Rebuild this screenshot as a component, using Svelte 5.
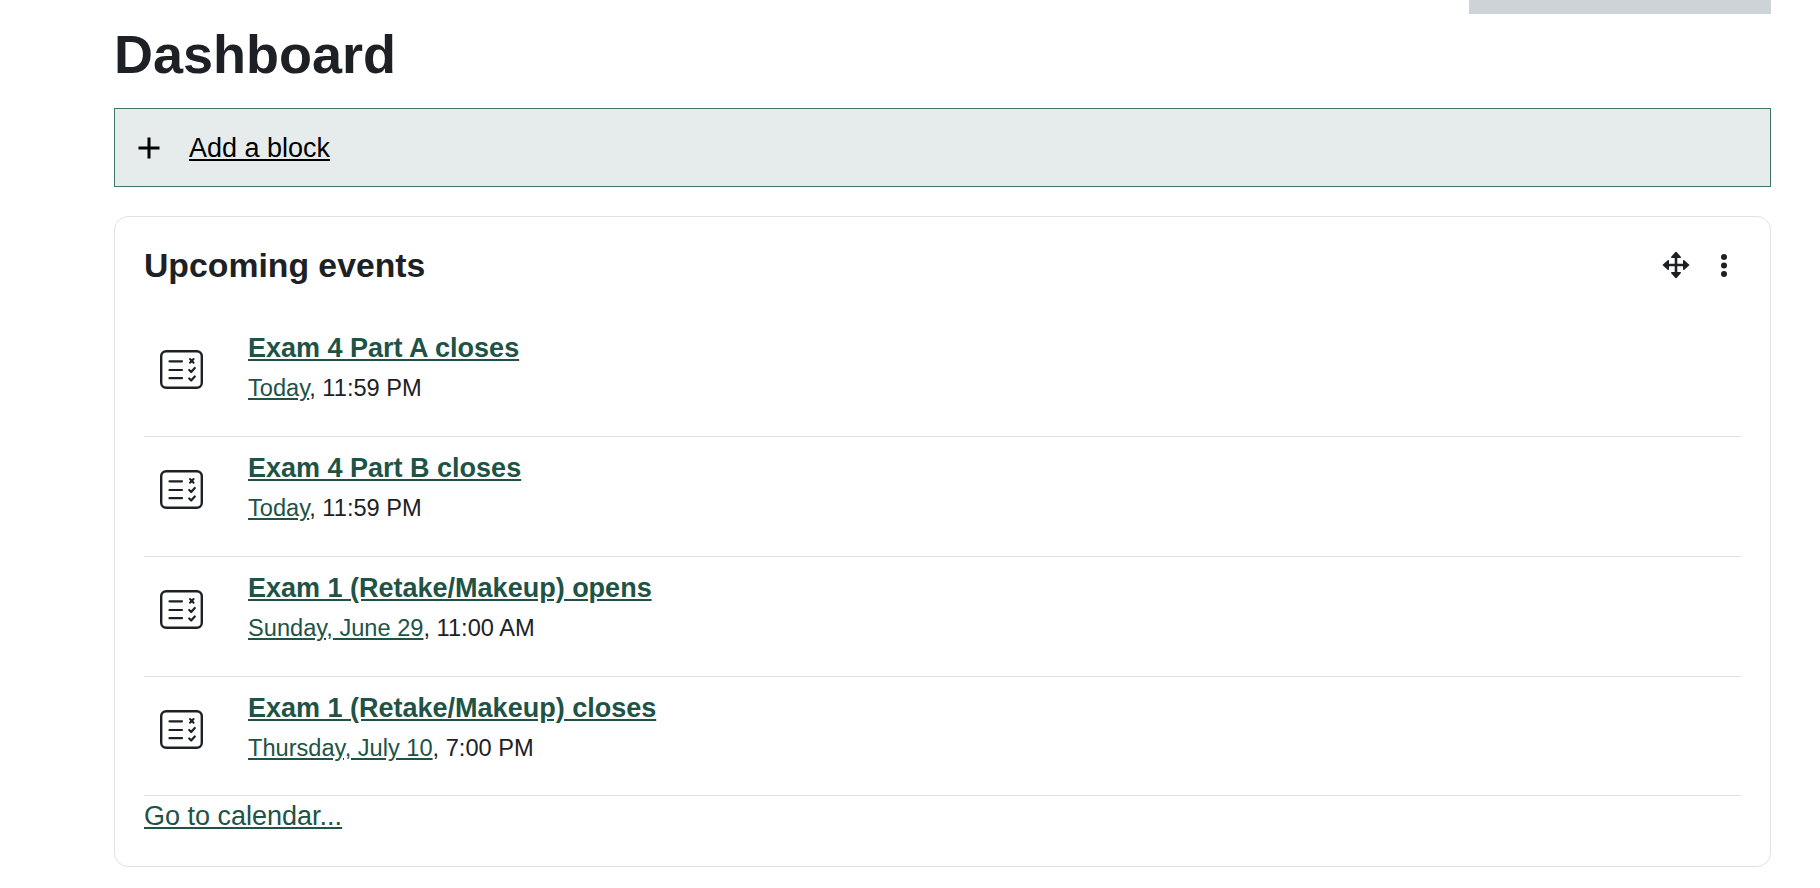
<script>
  const events = [
    { title: 'Exam 4 Part A closes', date: 'Today', time: '11:59 PM' },
    { title: 'Exam 4 Part B closes', date: 'Today', time: '11:59 PM' },
    { title: 'Exam 1 (Retake/Makeup) opens', date: 'Sunday, June 29', time: '11:00 AM' },
    { title: 'Exam 1 (Retake/Makeup) closes', date: 'Thursday, July 10', time: '7:00 PM' }
  ];
</script>

<div class="page">
  <div class="topbar"><div class="greybar"></div></div>
  <h1>Dashboard</h1>
  <div class="addblock">
    <svg class="plus" viewBox="0 0 24 24" width="24" height="24"><path d="M12 1.5v21M1.5 12h21" stroke="#000" stroke-width="3" fill="none" /></svg>
    <a href="#add">Add a block</a>
  </div>
  <section class="card">
    <header>
      <h2>Upcoming events</h2>
      <div class="tools">
        <svg viewBox="0 0 28 28" width="28" height="28" fill="#1d2125" stroke="#1d2125" stroke-linejoin="round">
          <path d="M14 3v22M3 14h22" stroke-width="2.6" fill="none" />
          <path d="M14 1.5l4.2 4.7h-8.4zM14 26.5l4.2-4.7h-8.4zM1.5 14l4.7-4.2v8.4zM26.5 14l-4.7-4.2v8.4z" stroke-width="1.6" />
        </svg>
        <svg viewBox="0 0 10 24" width="10" height="24" fill="#1d2125">
          <circle cx="5" cy="4" r="3" /><circle cx="5" cy="12.5" r="3" /><circle cx="5" cy="21" r="3" />
        </svg>
      </div>
    </header>
    <ul>
      {#each events as e}
        <li>
          <svg class="ev" viewBox="0 0 43 39" width="43" height="39" fill="none" stroke="#1d2125" stroke-linecap="round" stroke-linejoin="round">
            <rect x="1.2" y="1.2" width="40.6" height="36.6" rx="5" stroke-width="2.4" />
            <path d="M9.5 11.3h12.5M9.5 20h12.5M9.5 28.2h12.5" stroke-width="2.2" />
            <path d="M30 9l3.6 3.8M33.6 9l-3.6 3.8" stroke-width="2" />
            <path d="M29.2 20l2 2 3.6-4M29.2 28.5l2 2 3.6-4" stroke-width="2.2" />
          </svg>
          <div class="info">
            <a class="title" href="#e">{e.title}</a>
            <div class="when"><a href="#d">{e.date}</a>, {e.time}</div>
          </div>
        </li>
      {/each}
    </ul>
    <a class="cal" href="#cal">Go to calendar...</a>
  </section>
</div>

<style>
  :global(body) {
    margin: 0;
    background: #fff;
    font-family: "Liberation Sans", Arial, sans-serif;
    color: #1d2125;
  }
  .page {
    box-sizing: border-box;
    height: 888px;
    overflow: hidden;
    padding: 0 49px 0 114px;
  }
  .topbar {
    display: flex;
    justify-content: flex-end;
  }
  .greybar {
    width: 302px;
    height: 14px;
    background: #cdd3d7;
  }
  h1 {
    margin: 10px 0 0;
    font-size: 54px;
    line-height: 60px;
    font-weight: 700;
  }
  .addblock {
    box-sizing: border-box;
    display: flex;
    align-items: center;
    height: 79px;
    margin-top: 24px;
    padding-left: 22px;
    background: #e6ecec;
    border: 1px solid #3d7566;
    gap: 28px;
    font-size: 27px;
    line-height: 33px;
  }
  .addblock a {
    color: #000;
    padding-top: 2px;
  }
  .card {
    box-sizing: border-box;
    height: 651px;
    margin-top: 29px;
    padding: 0 29px;
    border: 1px solid #dee2e6;
    border-radius: 14px;
  }
  header {
    box-sizing: border-box;
    display: flex;
    justify-content: space-between;
    align-items: center;
    height: 100px;
    padding-bottom: 4px;
  }
  h2 {
    margin: 0;
    font-size: 33.75px;
    font-weight: 700;
  }
  .tools {
    display: flex;
    align-items: center;
    gap: 29px;
    margin-right: 12px;
  }
  ul {
    margin: 0;
    padding: 0;
    list-style: none;
  }
  li {
    box-sizing: border-box;
    display: flex;
    height: 120px;
    border-bottom: 1px solid #dee2e6;
    padding-left: 16px;
  }
  li:last-child {
    height: 119px;
  }
  .ev {
    margin-top: 33px;
    flex: none;
  }
  .info {
    margin-left: 45px;
    padding-top: 12px;
  }
  .title {
    font-size: 27px;
    line-height: 38px;
    font-weight: 700;
    color: #205346;
  }
  .when {
    margin-top: 3px;
    font-size: 23.625px;
    line-height: 36px;
  }
  .when a, .cal {
    color: #205346;
  }
  .cal {
    display: block;
    font-size: 27px;
    line-height: 41px;
  }
</style>
